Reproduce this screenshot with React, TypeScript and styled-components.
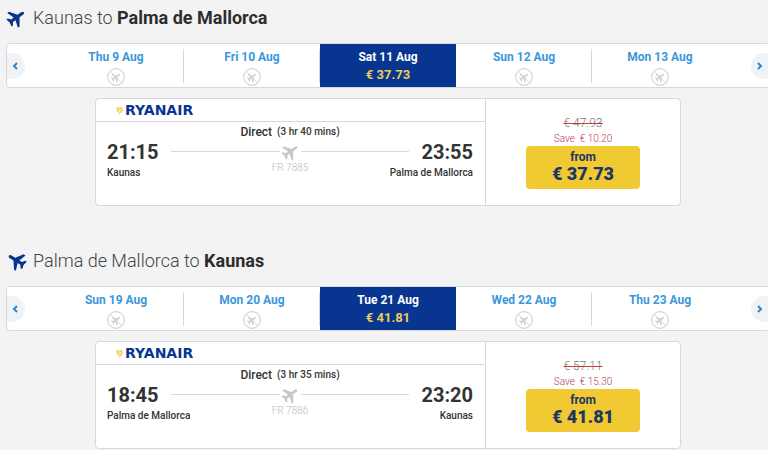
import React from "react";
import styled, { createGlobalStyle, css } from "styled-components";

const GlobalStyle = createGlobalStyle`
  *, *::before, *::after { box-sizing: border-box; }
  body {
    margin: 0;
    background: #f3f3f3;
    color: #333;
    font-family: Roboto, "Liberation Sans", sans-serif;
    overflow-x: hidden;
  }
  button { font-family: inherit; cursor: pointer; }
`;

const navy = "#073590";
const blue = "#3b97dc";
const line = "#d3d9dc";

const Page = styled.main`
  display: grid;
  grid-template-columns: minmax(0, 1fr);
  gap: 37px;
  padding-left: 6px;
  overflow: hidden;
`;

const Journey = styled.section`
  margin-right: -2px;
`;

const Heading = styled.h2`
  display: flex;
  align-items: center;
  gap: 7px;
  height: 43px;
  margin: 0;
  padding: 0 0 8px 1px;
  font-size: 18px;
  line-height: 24px;
  font-weight: 300;
  color: #444;

  strong { font-weight: 700; color: #2d2d2d; }
`;

const HeadingPlane = styled.svg<{ $inbound?: boolean }>`
  width: 19px;
  height: 19px;
  flex: none;
  fill: ${navy};
  transform: rotate(${(p) => (p.$inbound ? -58 : 54)}deg);
`;

const DateStrip = styled.nav`
  display: flex;
  align-items: center;
  justify-content: space-between;
  height: 45px;
  background: #fff;
  border: 1px solid ${line};
  border-radius: 4px;
  overflow: hidden;
`;

const Arrow = styled.button<{ $next?: boolean }>`
  display: flex;
  align-items: center;
  justify-content: center;
  flex: none;
  width: 18px;
  height: 26px;
  padding: ${(p) => (p.$next ? "0" : "0 2px 0 0")};
  border: 0;
  background: #f0f3f6;
  border-radius: ${(p) => (p.$next ? "13px 0 0 13px" : "0 13px 13px 0")};

  svg { width: 6px; height: 8px; fill: none; stroke: #2b86d0; stroke-width: 2; }
`;

const Days = styled.div`
  display: grid;
  grid-template-columns: repeat(5, 1fr);
  flex: 1;
  align-self: stretch;
  margin: 0 23px;
`;

const Day = styled.button<{ $selected?: boolean }>`
  display: flex;
  flex-direction: column;
  align-items: center;
  padding: 5px 0 0;
  border: 0;
  background: linear-gradient(${line}, ${line}) right center / 1px 34px no-repeat;
  color: ${blue};
  font-size: 12px;
  line-height: 17px;
  font-weight: 700;

  &:last-child { background: none; }
  ${(p) =>
    p.$selected &&
    css`
      background: ${navy};
      color: #fff;
    `}
`;

const DayPrice = styled.span`
  color: #e9d05a;
  font-size: 13px;
  line-height: 18px;
`;

const NoFlight = styled.svg`
  width: 20px;
  height: 20px;
  margin-top: 1px;
  fill: #d0d0d0;
`;

const Card = styled.article`
  display: grid;
  grid-template-columns: minmax(0, 1fr) 194px;
  max-width: 586px;
  min-height: 108px;
  margin: 10px auto 0;
  background: #fff;
  border: 1px solid ${line};
  border-radius: 4px;
`;

const Flight = styled.div`
  border-right: 1px solid ${line};
`;

const Carrier = styled.div`
  display: flex;
  align-items: center;
  gap: 1px;
  height: 23px;
  padding-left: 19px;
  border-bottom: 1px solid ${line};
  color: ${navy};
  font: 700 14px/16px "DejaVu Sans", sans-serif;

  svg { flex: none; width: 9px; height: 9px; }
`;

const Route = styled.div`
  display: grid;
  grid-template-columns: 64px 1fr 64px;
  padding: 0 12px 0 11px;
`;

const Duration = styled.div`
  grid-column: 1 / -1;
  display: flex;
  justify-content: center;
  gap: 5px;
  padding-top: 2px;
  font-size: 12px;
  line-height: 16px;
  font-weight: 500;

  small { font-size: 10px; line-height: 15px; }
`;

const Stop = styled.div<{ $end?: boolean }>`
  display: flex;
  flex-direction: column;
  align-items: ${(p) => (p.$end ? "flex-end" : "flex-start")};
  white-space: nowrap;
  font-size: 10px;
  line-height: 17px;
  font-weight: 500;

  time { font-size: 20px; line-height: 24px; font-weight: 700; }
`;

const Path = styled.div`
  display: flex;
  flex-direction: column;
  align-items: center;
  color: #bbb;
  font-size: 10px;
  line-height: 12px;
  font-weight: 300;
`;

const PathLine = styled.div`
  display: flex;
  align-items: center;
  align-self: stretch;
  gap: 2px;
  height: 22px;

  &::before, &::after { content: ""; flex: 1; height: 1px; background: ${line}; }
  svg { width: 17px; height: 17px; fill: #c8c8c8; transform: rotate(54deg); }
`;

const Fare = styled.div`
  display: flex;
  flex-direction: column;
  align-items: center;
  padding-top: 17px;
  font-size: 10px;
  line-height: 15px;
  font-weight: 300;
`;

const OldPrice = styled.s`
  font-size: 12px;
  color: #777;
  text-decoration-color: #c4403c;
`;

const Saving = styled.span`
  color: #b83c55;
  white-space: pre;
`;

const FareButton = styled.button`
  display: flex;
  flex-direction: column;
  align-items: center;
  width: 114px;
  height: 43px;
  padding: 4px 0 0;
  border: 0;
  border-radius: 4px;
  background: #f1c933;
  color: #1d3763;
  font-size: 12px;
  line-height: 15px;
  font-weight: 700;

  strong { font-size: 18px; line-height: 18px; }
`;

const planePath =
  "M12 0.500c1.300 0 2.100 1.600 2.100 3.500v4.800L23.500 15.500v2.700L14 15v4L17.500 21.500V24L12 22.500 6.500 24V21.500L10 19V15L0.500 18.200V15.500L9.900 8.800V4C9.900 2.100 10.700 0.500 12 0.500z";

type JourneyData = {
  from: string;
  to: string;
  inbound?: boolean;
  days: string[];
  price: string;
  oldPrice: string;
  saving: string;
  duration: string;
  departs: string;
  arrives: string;
  flight: string;
};

const journeys: JourneyData[] = [
  {
    from: "Kaunas",
    to: "Palma de Mallorca",
    days: ["Thu 9 Aug", "Fri 10 Aug", "Sat 11 Aug", "Sun 12 Aug", "Mon 13 Aug"],
    price: "€ 37.73",
    oldPrice: "€ 47.93",
    saving: "€ 10.20",
    duration: "(3 hr 40 mins)",
    departs: "21:15",
    arrives: "23:55",
    flight: "FR 7885",
  },
  {
    from: "Palma de Mallorca",
    to: "Kaunas",
    inbound: true,
    days: ["Sun 19 Aug", "Mon 20 Aug", "Tue 21 Aug", "Wed 22 Aug", "Thu 23 Aug"],
    price: "€ 41.81",
    oldPrice: "€ 57.11",
    saving: "€ 15.30",
    duration: "(3 hr 35 mins)",
    departs: "18:45",
    arrives: "23:20",
    flight: "FR 7886",
  },
];

function JourneyPanel({ data }: { data: JourneyData }) {
  return (
    <Journey>
      <Heading>
        <HeadingPlane $inbound={data.inbound} viewBox="0 0 24 24" aria-hidden="true">
          <path d={planePath} />
        </HeadingPlane>
        <span>
          {data.from} to <strong>{data.to}</strong>
        </span>
      </Heading>
      <DateStrip aria-label={`Dates from ${data.from}`}>
        <Arrow aria-label="Earlier dates">
          <svg viewBox="0 0 6 8"><path d="M5 1L2 4l3 3" /></svg>
        </Arrow>
        <Days>
          {data.days.map((day, i) => (
            <Day key={day} $selected={i === 2} aria-pressed={i === 2}>
              {day}
              {i === 2 ? (
                <DayPrice>{data.price}</DayPrice>
              ) : (
                <NoFlight viewBox="0 0 20 20" aria-hidden="true">
                  <circle cx="10" cy="10" r="8.300" fill="none" stroke="#d4d4d4" strokeWidth="1.200" />
                  <path transform="translate(10 10) rotate(54) scale(.42) translate(-12 -12)" d={planePath} />
                  <path d="M4 4L16 16" stroke="#d8d8d8" />
                </NoFlight>
              )}
            </Day>
          ))}
        </Days>
        <Arrow $next aria-label="Later dates">
          <svg viewBox="0 0 6 8"><path d="M1 1l3 3-3 3" /></svg>
        </Arrow>
      </DateStrip>
      <Card>
        <Flight>
          <Carrier>
            <svg viewBox="0 0 9 9" aria-hidden="true">
              <path d="M1 1.500L4 0.500 7 1 8 3.500 7 6.500 4.500 8.500 2.500 6.500 1 4z" fill="#fbe9ae" />
              <path d="M1 2l3 1.500 2-2L7.500 3 5.500 6.500 4 7.500M2 4l2 2" fill="none" stroke="#f2c650" />
            </svg>
            <span>RYANAIR</span>
          </Carrier>
          <Route>
            <Duration>
              <span>Direct</span>
              <small>{data.duration}</small>
            </Duration>
            <Stop>
              <time>{data.departs}</time>
              <span>{data.from}</span>
            </Stop>
            <Path>
              <PathLine>
                <svg viewBox="0 0 24 24" aria-hidden="true"><path d={planePath} /></svg>
              </PathLine>
              <span>{data.flight}</span>
            </Path>
            <Stop $end>
              <time>{data.arrives}</time>
              <span>{data.to}</span>
            </Stop>
          </Route>
        </Flight>
        <Fare>
          <OldPrice>{data.oldPrice}</OldPrice>
          <Saving>{`Save  ${data.saving}`}</Saving>
          <FareButton>
            from
            <strong>{data.price}</strong>
          </FareButton>
        </Fare>
      </Card>
    </Journey>
  );
}

export default function App() {
  return (
    <>
      <GlobalStyle />
      <Page>
        {journeys.map((j) => (
          <JourneyPanel key={j.flight} data={j} />
        ))}
      </Page>
    </>
  );
}
